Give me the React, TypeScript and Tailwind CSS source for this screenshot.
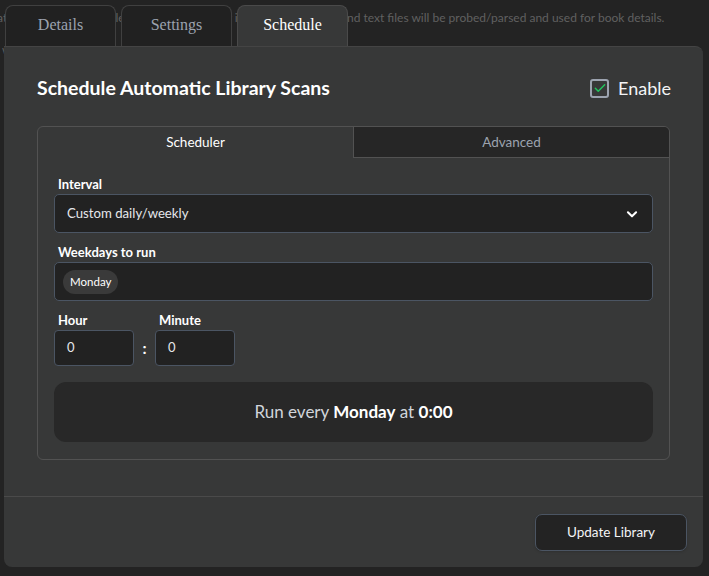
import React, { useState } from "react";

const tabs = ["Details", "Settings", "Schedule"];

function Chevron() {
  return (
    <svg width="14" height="14" viewBox="0 0 24 24" fill="none" stroke="currentColor" strokeWidth={3.5} strokeLinecap="round" strokeLinejoin="round">
      <path d="M5 9l7 7 7-7" />
    </svg>
  );
}

function CheckIcon() {
  return (
    <svg width="14" height="14" viewBox="0 0 24 24" fill="none" stroke="#22c55e" strokeWidth={2.5} strokeLinecap="round" strokeLinejoin="round">
      <path d="M4 12.5l5 5L20 6.5" />
    </svg>
  );
}

export default function App() {
  const [active] = useState("Schedule");
  const [subTab] = useState("Scheduler");

  return (
    <div className="relative w-[709px] h-[576px] overflow-hidden bg-[#232323] text-white" style={{ fontFamily: "Lato, 'Noto Sans', sans-serif" }}>
      {/* page behind the modal */}
      <div className="pt-[10px] text-[12px] leading-[16px] text-[#606060] whitespace-nowrap">
        <div className="flex">
          <span className="w-[347px] shrink-0 overflow-hidden flex justify-end">
            <span>when enabled, metadata in audio files, opf files, nfo files and cover images in the folder a</span>
          </span>
          <span>nd text files will be probed/parsed and used for book details.</span>
        </div>
        <p className="mt-[16px] pl-[2px]">when scanning</p>
      </div>

      {/* modal */}
      <div className="absolute left-[4px] top-[5px] w-[699px]">
        <div className="flex gap-[5px] pl-[1px]">
          {tabs.map((t) => (
            <div
              key={t}
              className={`w-[111px] h-[41px] rounded-t-[8px] border border-b-0 flex items-center justify-center text-[16px] pb-[2px] ${
                t === active
                  ? "bg-[#373838] border-[#4a4a4a] text-white -mb-px relative z-10"
                  : "bg-[#212121] border-[#404040] text-[#9ca3af]"
              }`}
              style={{ fontFamily: "'Liberation Serif', serif" }}
            >
              {t}
            </div>
          ))}
        </div>

        <div className="bg-[#373838] rounded-b-[8px] rounded-tr-[8px] border-t border-[#444]">
          <div className="px-[33px] pt-[26px] pb-[36px]">
            <div className="flex items-center justify-between h-[30px]">
              <h1 className="text-[19.5px] font-bold">Schedule Automatic Library Scans</h1>
              <label className="flex items-center gap-[9px] mr-[-1px]">
                <span className="w-[19px] h-[19px] rounded-[3px] border-2 border-[#9ca3af] flex items-center justify-center">
                  <CheckIcon />
                </span>
                <span className="text-[18px] text-[#f3f4f6]">Enable</span>
              </label>
            </div>

            <div className="mt-[23px] w-[633px] rounded-[6px] border border-[#525252] overflow-hidden">
              <div className="flex h-[31px] text-[13.5px]">
                <div className={`flex-1 flex items-center justify-center ${subTab === "Scheduler" ? "text-white" : ""}`}>Scheduler</div>
                <div className="flex-1 flex items-center justify-center bg-[#262626] text-[#9ca3af] border-l border-b border-[#525252]">Advanced</div>
              </div>

              <div className="px-[16px] pt-[18px] pb-[17px]">
                <label className="block pl-[4px] text-[13px] font-bold leading-[16px]">Interval</label>
                <div className="mt-[2px] h-[39px] rounded-[5px] border border-[#4b5563] bg-[#222222] flex items-center justify-between pl-[12px] pr-[13px]">
                  <span className="text-[13.2px] text-[#e5e7eb]">Custom daily/weekly</span>
                  <Chevron />
                </div>

                <label className="block mt-[11px] pl-[4px] text-[13px] font-bold leading-[16px]">Weekdays to run</label>
                <div className="mt-[2px] h-[39px] rounded-[5px] border border-[#4b5563] bg-[#222222] flex items-center px-[8px]">
                  <span className="h-[24px] px-[7px] rounded-full bg-[#3a3a3a] text-[11.5px] flex items-center">Monday</span>
                </div>

                <div className="mt-[11px] flex items-end">
                  <div>
                    <label className="block pl-[4px] text-[13px] font-bold leading-[16px]">Hour</label>
                    <div className="mt-[2px] w-[80px] h-[36px] rounded-[4px] border border-[#4b5563] bg-[#222222] flex items-center px-[12px] text-[13px] text-[#e5e7eb]">0</div>
                  </div>
                  <span className="w-[21px] h-[36px] flex items-center justify-center text-[16px] font-bold">:</span>
                  <div>
                    <label className="block pl-[4px] text-[13px] font-bold leading-[16px]">Minute</label>
                    <div className="mt-[2px] w-[80px] h-[36px] rounded-[4px] border border-[#4b5563] bg-[#222222] flex items-center px-[12px] text-[13px] text-[#e5e7eb]">0</div>
                  </div>
                </div>

                <div className="mt-[16px] h-[60px] rounded-[12px] bg-[#282828] flex items-center justify-center text-[17px] text-[#d1d5db]">
                  <p>
                    Run every <span className="font-bold text-white">Monday</span> at <span className="font-bold text-white">0:00</span>
                  </p>
                </div>
              </div>
            </div>
          </div>

          <div className="border-t border-[#4a4a4a] h-[71px] flex items-center justify-end pr-[16px]">
            <button className="w-[152px] h-[37px] rounded-[7px] border border-[#4b5563] bg-[#232323] text-[13.5px] text-[#f3f4f6] shadow">
              Update Library
            </button>
          </div>
        </div>
      </div>
    </div>
  );
}
